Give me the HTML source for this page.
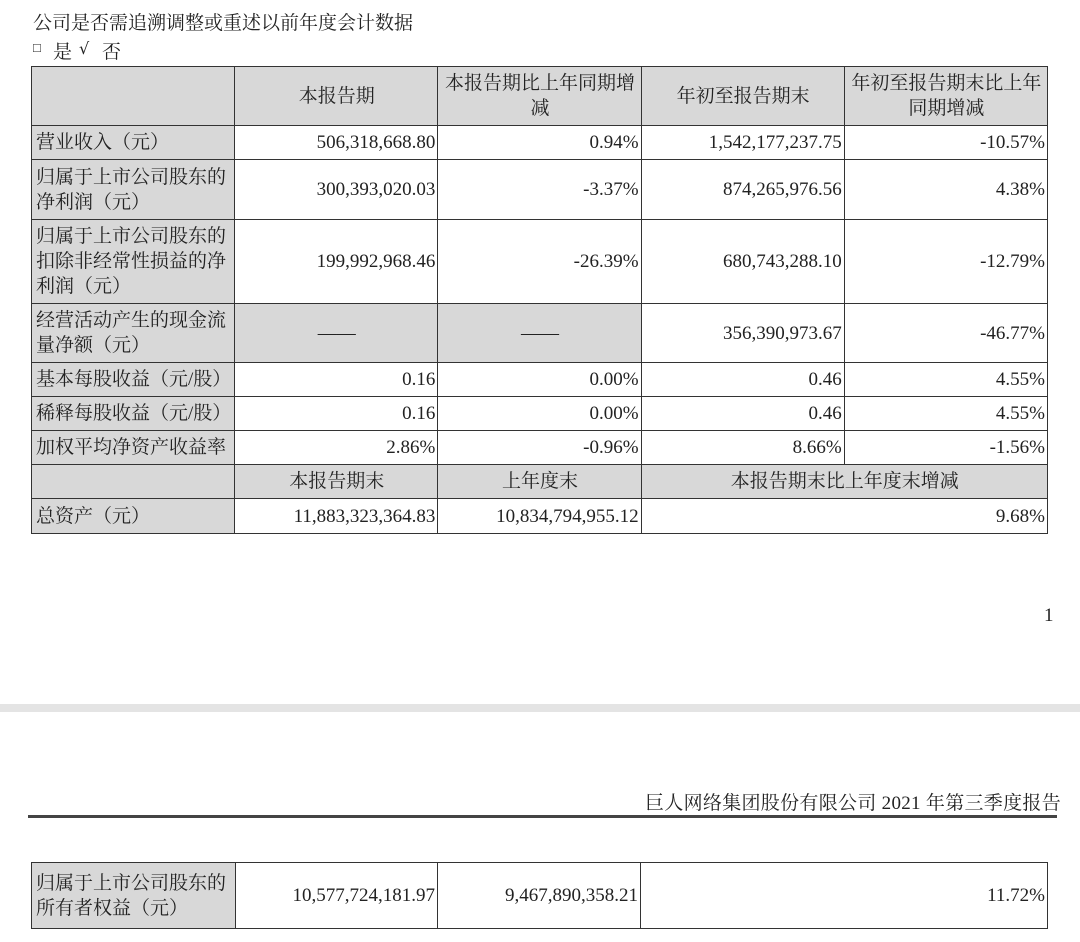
<!DOCTYPE html>
<html><head><meta charset="utf-8"><style>
body{margin:0;width:1080px;height:942px;background:#fff;position:relative;overflow:hidden;font-family:"Liberation Serif","Noto Serif CJK SC",serif;color:#222;}
.t{position:absolute;font-size:19px;white-space:nowrap}
table{position:absolute;border-collapse:collapse;table-layout:fixed;font-size:19px;line-height:25px}
td{border:1px solid #333;padding:0 2px 0 3px;text-align:right;vertical-align:middle;overflow:hidden;white-space:nowrap}
td.l{text-align:left;background:#d8d8d8;white-space:normal;padding:0 2px 0 4px}
td.g{background:#d8d8d8;text-align:center;white-space:normal}
</style></head><body>
<div class="t" style="left:33px;top:8px">公司是否需追溯调整或重述以前年度会计数据</div>
<div class="t" style="left:33px;top:37px;width:100px;height:26px"><span style="position:absolute;left:0;top:3px;font-size:13px">□</span><span style="position:absolute;left:20px;top:0">是</span><span style="position:absolute;left:46px;top:2px;font-family:'DejaVu Serif',serif;font-size:16px">√</span><span style="position:absolute;left:69px;top:0">否</span></div>
<table style="left:31px;top:66px;width:1017px">
<colgroup><col style="width:203px"><col style="width:203px"><col style="width:203px"><col style="width:203px"><col style="width:203px"></colgroup>
<tr style="height:59px"><td class="l"></td><td class="g">本报告期</td><td class="g">本报告期比上年同期增减</td><td class="g">年初至报告期末</td><td class="g">年初至报告期末比上年同期增减</td></tr>
<tr style="height:34px"><td class="l">营业收入（元）</td><td>506,318,668.80</td><td>0.94%</td><td>1,542,177,237.75</td><td>-10.57%</td></tr>
<tr style="height:60px"><td class="l">归属于上市公司股东的净利润（元）</td><td>300,393,020.03</td><td>-3.37%</td><td>874,265,976.56</td><td>4.38%</td></tr>
<tr style="height:84px"><td class="l">归属于上市公司股东的扣除非经常性损益的净利润（元）</td><td>199,992,968.46</td><td>-26.39%</td><td>680,743,288.10</td><td>-12.79%</td></tr>
<tr style="height:59px"><td class="l">经营活动产生的现金流量净额（元）</td><td class="g">——</td><td class="g">——</td><td>356,390,973.67</td><td>-46.77%</td></tr>
<tr style="height:34px"><td class="l">基本每股收益（元/股）</td><td>0.16</td><td>0.00%</td><td>0.46</td><td>4.55%</td></tr>
<tr style="height:34px"><td class="l">稀释每股收益（元/股）</td><td>0.16</td><td>0.00%</td><td>0.46</td><td>4.55%</td></tr>
<tr style="height:34px"><td class="l">加权平均净资产收益率</td><td>2.86%</td><td>-0.96%</td><td>8.66%</td><td>-1.56%</td></tr>
<tr style="height:34px"><td class="l"></td><td class="g">本报告期末</td><td class="g">上年度末</td><td class="g" colspan="2">本报告期末比上年度末增减</td></tr>
<tr style="height:35px"><td class="l">总资产（元）</td><td>11,883,323,364.83</td><td>10,834,794,955.12</td><td colspan="2">9.68%</td></tr>
</table>
<div class="t" style="left:1044px;top:605px">1</div>
<div style="position:absolute;left:0;top:704px;width:1080px;height:8px;background:#e4e4e4"></div>
<div class="t" style="left:645px;top:788px;font-size:19px;letter-spacing:0.3px">巨人网络集团股份有限公司 2021 年第三季度报告</div>
<div style="position:absolute;left:28px;top:815px;width:1029px;height:3px;background:#444"></div>
<table style="left:31px;top:862px;width:1016px">
<colgroup><col style="width:204px"><col style="width:202px"><col style="width:203px"><col style="width:407px"></colgroup>
<tr style="height:66px"><td class="l">归属于上市公司股东的所有者权益（元）</td><td>10,577,724,181.97</td><td>9,467,890,358.21</td><td>11.72%</td></tr>
</table>
</body></html>
